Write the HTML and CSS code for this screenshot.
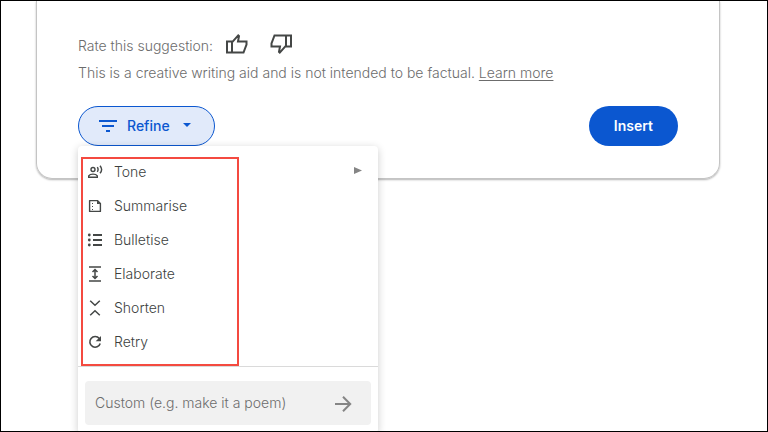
FILE: index.html
```html
<!DOCTYPE html>
<html lang="en-GB">
<head>
    <meta charset="UTF-8">
    <meta name="viewport" content="width=device-width, initial-scale=1.0">
    <title>Help me write</title>
    <link rel="stylesheet" href="styles.css">
</head>
<body>
    <main class="frame">
        <section class="card">
            <div class="rating">
                <span>Rate this suggestion:</span>
                <button class="icon-button" type="button" aria-label="Good suggestion">
                    <svg width="24" height="24" viewBox="0 0 24 24" fill="none" stroke="#444746" stroke-width="2"><path d="M2 9.5h5v11H2zM7 10.3L13.2 3.4 14 4.2 13 9.5h8.5v3l-3 8H7"/></svg>
                </button>
                <button class="icon-button" type="button" aria-label="Bad suggestion">
                    <svg width="24" height="24" viewBox="0 0 24 24" fill="none" stroke="#444746" stroke-width="2"><path d="M22 14.5h-5v-11h5zM17 13.7L10.8 20.6 10 19.8 11 14.5H2.5v-3l3-8H17"/></svg>
                </button>
            </div>
            <p class="notice">This is a creative writing aid and is not intended to be factual. <a href="#">Learn more</a></p>

            <div class="actions">
                <div class="dropdown">
                    <button class="refine" type="button" aria-haspopup="menu" aria-expanded="true">
                        <svg width="20" height="20" viewBox="0 0 20 20" fill="#0b57d0"><path d="M1 4h18v2H1zM4 9h12v2H4zM8 14h4v2H8z"/></svg>
                        <span>Refine</span>
                        <svg width="8" height="6" viewBox="0 0 8 6" fill="#0b57d0"><path d="M0 0h8L4 4z"/></svg>
                    </button>

                    <div class="menu">
                        <ul class="menu-list">
                            <li><button class="menu-item" type="button">
                                <svg width="16" height="16" viewBox="0 0 16 16" fill="none" stroke="#444746" stroke-width="1.4"><circle cx="6" cy="5.5" r="2"/><path d="M1.7 13.3v-1.5C3.2 9.6 8.8 9.6 10.3 11.8v1.5zM10.3 3.2c.9 1.3.9 3.3 0 4.6M13 1.7c1.9 2.2 1.9 5.4 0 7.6"/></svg>
                                <span>Tone</span>
                                <svg class="submenu-arrow" width="8" height="10" viewBox="0 0 8 10" fill="#858585"><path d="M0 0v7l8-3.5z"/></svg>
                            </button></li>
                            <li><button class="menu-item" type="button">
                                <svg width="16" height="16" viewBox="0 0 16 16" fill="none" stroke="#444746" stroke-width="1.4"><path d="M2.6 2.6h7.8l3 3v7.8H2.6z" stroke-linejoin="round"/><path d="M10 2.5v3.5h3.5z" fill="#444746" stroke="none"/><path d="M5 5.5h1M5 8.5h1M5 11.5h1" stroke-width="1"/></svg>
                                <span>Summarise</span>
                            </button></li>
                            <li><button class="menu-item" type="button">
                                <svg width="16" height="16" viewBox="0 0 16 16" fill="#444746"><circle cx="2.3" cy="3" r="1.4"/><circle cx="2.3" cy="8" r="1.4"/><circle cx="2.3" cy="13" r="1.4"/><path d="M6 2h9v2H6zM6 7h9v2H6zM6 12h9v2H6z"/></svg>
                                <span>Bulletise</span>
                            </button></li>
                            <li><button class="menu-item" type="button">
                                <svg width="16" height="16" viewBox="0 0 16 16" fill="none" stroke="#444746" stroke-width="1.5"><path d="M2 1h12M2 15h12M8 4v8M5.5 6L8 3.5 10.5 6M5.5 10L8 12.5 10.5 10"/></svg>
                                <span>Elaborate</span>
                            </button></li>
                            <li><button class="menu-item" type="button">
                                <svg width="16" height="16" viewBox="0 0 16 16" fill="none" stroke="#444746" stroke-width="1.5"><path d="M3.2 .7L8 5.3 12.8 .7M3.2 15.3L8 10.7 12.8 15.3"/></svg>
                                <span>Shorten</span>
                            </button></li>
                            <li><button class="menu-item" type="button">
                                <svg width="16" height="16" viewBox="0 0 16 16" fill="none" stroke="#444746" stroke-width="1.6"><path d="M12.3 4.6A5.3 5.3 0 1 0 13.2 9.4"/><path d="M14 2v5.3H8.7z" fill="#444746" stroke="none"/></svg>
                                <span>Retry</span>
                            </button></li>
                        </ul>
                        <form class="custom">
                            <input type="text" placeholder="Custom (e.g. make it a poem)" aria-label="Custom refinement">
                            <button class="icon-button" type="button" aria-label="Send">
                                <svg width="18" height="18" viewBox="0 0 18 18" fill="none" stroke="#858585" stroke-width="2"><path d="M1 10h15M9 2.8L16.2 10 9 17.2"/></svg>
                            </button>
                        </form>
                        <div class="highlight"></div>
                    </div>
                </div>
                <button class="insert" type="button">Insert</button>
            </div>
        </section>
    </main>
</body>
</html>
```

FILE: styles.css
```css
* {
    box-sizing: border-box;
}

body {
    margin: 0;
    background: #fff;
    color: #6c6c6c;
    font-family: Inter, Roboto, sans-serif;
    font-size: 14px;
    font-weight: 300;
    line-height: 20px;
}

button,
input {
    margin: 0;
    padding: 0;
    border: 0;
    background: none;
    color: inherit;
    font: inherit;
}

button {
    cursor: pointer;
}

svg {
    display: block;
    flex: none;
}

.frame {
    height: 100vh;
    padding: 0 47px 0 35px;
    border: 1px solid #000;
    overflow: hidden;
}

.card {
    padding: 28px 41px 32px;
    border: 1px solid #c4c4c4;
    border-top: 0;
    border-radius: 0 0 16px 16px;
    box-shadow: 0 1px 2px rgba(0, 0, 0, 0.3);
}

.rating {
    display: flex;
    align-items: center;
    gap: 20px;
    height: 30px;
}

.rating span {
    margin-right: -8px;
    padding-top: 4px;
}

.notice {
    margin: 4px 0 23px;
}

.notice a {
    color: inherit;
    text-underline-offset: 2px;
}

.actions {
    display: flex;
    align-items: center;
    justify-content: space-between;
}

.dropdown {
    position: relative;
}

.refine {
    display: flex;
    align-items: center;
    height: 40px;
    padding: 0 23px 0 19px;
    border: 1px solid #0b57d0;
    border-radius: 20px;
    background: #e1eafa;
    color: #0b57d0;
    font-weight: 500;
}

.refine span {
    margin: 0 13px 0 9px;
}

.insert {
    height: 40px;
    padding: 0 25px;
    border-radius: 20px;
    background: #0b57d0;
    color: #fff;
    font-weight: 600;
}

.menu {
    position: absolute;
    top: 100%;
    left: 0;
    width: 300px;
    padding: 9px 0 8px;
    border-radius: 4px;
    background: #fff;
    box-shadow: 0 2px 8px rgba(0, 0, 0, 0.2);
}

.menu-list {
    margin: 0;
    padding: 0 0 7px;
    border-bottom: 1px solid #dadada;
    list-style: none;
}

.menu-item {
    display: flex;
    align-items: center;
    gap: 11px;
    width: 100%;
    height: 34px;
    padding: 0 16px 0 9px;
    color: #3c3f3e;
    text-align: left;
}

.submenu-arrow {
    margin-left: auto;
}

.custom {
    display: flex;
    align-items: center;
    height: 44px;
    margin: 14px 7px 0;
    padding: 0 19px 0 10px;
    border-radius: 4px;
    background: #f1f1f1;
}

.custom input {
    flex: 1;
    min-width: 0;
    outline: none;
}

.custom input::placeholder {
    color: #6c6c6c;
    opacity: 1;
}

.highlight {
    position: absolute;
    top: 11px;
    left: 3px;
    width: 158px;
    height: 209px;
    border: 2px solid #f44a40;
    pointer-events: none;
}
```
